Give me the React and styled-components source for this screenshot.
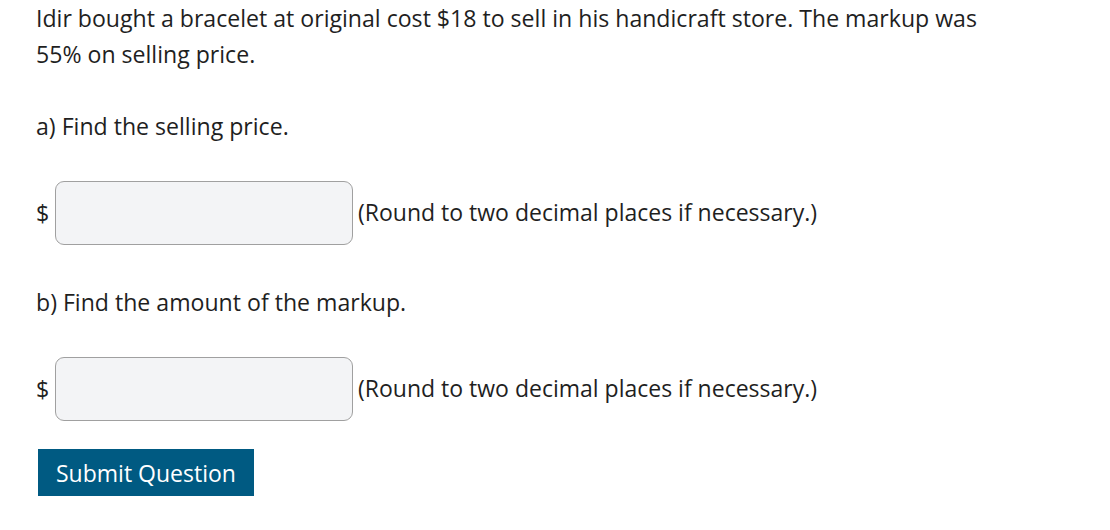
import React from 'react';
import styled, { createGlobalStyle } from 'styled-components';

const GlobalStyle = createGlobalStyle`
  body {
    margin: 0;
    background: #fff;
    font-family: "Open Sans", "Noto Sans", sans-serif;
    color: #1f1f1f;
  }
`;

const Page = styled.div`
  padding: 0 36px;
  font-size: 23.1px;
  line-height: 36px;
`;

const Text = styled.p`
  margin: 0 0 ${(p) => p.gap || 36}px;
  max-width: 980px;
`;

const AnswerRow = styled.div`
  display: flex;
  align-items: center;
  margin-bottom: ${(p) => p.gap || 38}px;
`;

const Dollar = styled.span`
  width: 19px;
`;

const Field = styled.input`
  box-sizing: border-box;
  width: 298px;
  height: 64px;
  border: 1px solid #a0a0a0;
  border-radius: 9px;
  background: #f3f4f6;
  margin-right: 5px;
  font: inherit;
`;

const Hint = styled.span`
  font-size: 23px;
  margin-top: -3px;
`;

const SubmitButton = styled.button`
  margin-left: 2px;
  height: 47px;
  padding: 0 18px;
  border: none;
  background: #005a82;
  color: #fff;
  font-family: inherit;
  font-size: 23px;
`;

export default function App() {
  return (
    <Page>
      <GlobalStyle />
      <Text>
        Idir bought a bracelet at original cost $18 to sell in his handicraft store. The markup was
        55% on selling price.
      </Text>
      <Text gap={37}>a) Find the selling price.</Text>
      <AnswerRow gap={39}>
        <Dollar>$</Dollar>
        <Field />
        <Hint>(Round to two decimal places if necessary.)</Hint>
      </AnswerRow>
      <Text gap={37}>b) Find the amount of the markup.</Text>
      <AnswerRow gap={28}>
        <Dollar>$</Dollar>
        <Field />
        <Hint>(Round to two decimal places if necessary.)</Hint>
      </AnswerRow>
      <SubmitButton>Submit Question</SubmitButton>
    </Page>
  );
}
